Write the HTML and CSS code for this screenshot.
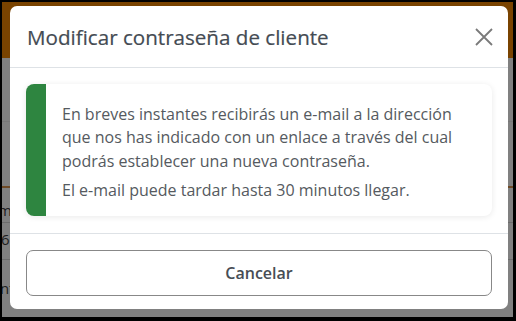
FILE: index.html
```html
<!DOCTYPE html>
<html lang="es">
<head>
<meta charset="utf-8">
<title>Modificar contraseña de cliente</title>
<link rel="stylesheet" href="styles.css">
</head>
<body>
<div class="frame">
  <div class="page">
    <div class="page-header"></div>
    <div class="page-row r1"></div>
    <div class="page-row r2"></div>
    <div class="page-row r3"><span class="frag">m</span></div>
    <div class="page-row r4"><span class="frag">6</span></div>
    <div class="page-row r5"><span class="frag">nt</span></div>
  </div>
  <div class="modal">
    <div class="modal-header">
      <h2 class="modal-title">Modificar contraseña de cliente</h2>
      <button class="close" aria-label="Cerrar">
        <svg width="18" height="18" viewBox="0 0 18 18"><path d="M1 1 L17 17 M17 1 L1 17" stroke="#7a7a7a" stroke-width="1.8" fill="none"/></svg>
      </button>
    </div>
    <div class="modal-body">
      <div class="alert">
        <div class="alert-bar"></div>
        <div class="alert-text">
          <p>En breves instantes recibirás un e-mail a la dirección que nos has indicado con un enlace a través del cual podrás establecer una nueva contraseña.</p>
          <p>El e-mail puede tardar hasta 30 minutos llegar.</p>
        </div>
      </div>
    </div>
    <div class="modal-footer">
      <button class="btn">Cancelar</button>
    </div>
  </div>
</div>
</body>
</html>
```
FILE: styles.css
```css
* { box-sizing: border-box; }
html, body { margin: 0; padding: 0; }
body {
  width: 516px;
  height: 321px;
  background: #000;
  font-family: "Open Sans", "Noto Sans", sans-serif;
  overflow: hidden;
}
.frame {
  position: relative;
  width: 516px;
  height: 321px;
  border-style: solid;
  border-color: #000;
  border-width: 2px 3px 4px 2px;
  overflow: hidden;
}
.page {
  display: flex;
  flex-direction: column;
  height: 100%;
  background: #808080;
}
.page-header {
  height: 56px;
  background: #794300;
  flex: none;
}
.page-row {
  flex: none;
  position: relative;
  color: #1e1e1e;
  font-size: 15px;
}
.r1 { height: 64px; border-bottom: 1px solid #787878; }
.r2 { height: 66px; border-bottom: 2px solid #6e4a26; }
.r3 { height: 35px; border-bottom: 1px solid #6c6c6c; }
.r4 { height: 37px; border-bottom: 1px solid #6c6c6c; }
.r5 { height: 40px; }
.frag { position: absolute; left: -2px; top: 10px; }
.r3 .frag { top: 12px; left: -4px; }
.r4 .frag { top: 6px; left: -1px; }
.r5 .frag { top: 18px; left: -2px; }

.modal {
  position: absolute;
  left: 8px;
  top: 4px;
  width: 498px;
  height: 303px;
  background: #fff;
  border-radius: 7px;
  display: flex;
  flex-direction: column;
}
.modal-header {
  height: 62px;
  display: flex;
  align-items: center;
  justify-content: space-between;
  padding: 0 15px 0 17px;
  border-bottom: 1px solid #dee2e6;
  flex: none;
}
.modal-title {
  margin: 0;
  font-size: 20.6px;
  font-weight: 500;
  color: #444b53;
  -webkit-text-stroke: 0.2px #444b53;
}
.close {
  border: 0;
  background: none;
  padding: 0;
  width: 18px;
  height: 18px;
  display: flex;
  margin-top: 1px;
}
.modal-body {
  padding: 16px 16px 17px 16px;
  border-bottom: 1px solid #dee2e6;
  flex: none;
}
.alert {
  display: flex;
  height: 132px;
  border-radius: 8px;
  overflow: hidden;
  background: #fff;
  box-shadow: 0 1px 6px rgba(0,0,0,0.09);
}
.alert-bar {
  width: 20px;
  background: #2e8540;
  flex: none;
}
.alert-text {
  padding: 19px 16px 0 16px;
  color: #555a60;
  font-size: 16px;
  line-height: 23.3px;
}
.alert-text p { margin: 0 0 6px 0; }
.modal-footer {
  padding: 16px 16px 12px 16px;
  flex: 1;
}
.btn {
  width: 100%;
  height: 46px;
  border: 1px solid #888;
  border-radius: 7px;
  background: #fff;
  font-family: "Open Sans", "Noto Sans", sans-serif;
  font-size: 16px;
  font-weight: 600;
  color: #474d55;
}
```
